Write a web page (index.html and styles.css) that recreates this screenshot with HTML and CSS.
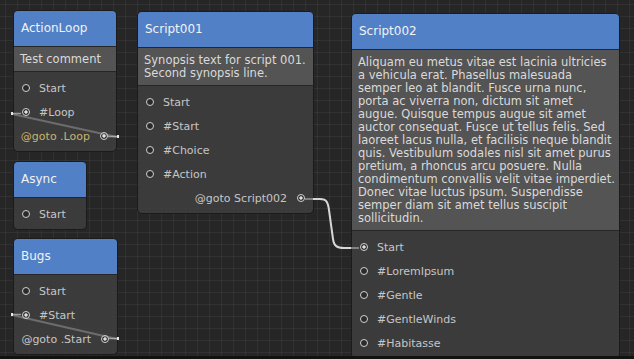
FILE: index.html
```html
<!DOCTYPE html>
<html>
<head>
    <title>Script Graph</title>
    <link rel="stylesheet" href="styles.css">
</head>
<body>
    <div class="canvas">
        <div class="node node-actionloop">
            <div class="node-title">ActionLoop</div>
            <div class="node-note">Test comment</div>
            <div class="node-ports">
                <div class="port"><span class="pin"></span><span class="label">Start</span></div>
                <div class="port"><span class="pin linked"></span><span class="label">#Loop</span></div>
                <div class="port out"><span class="label goto">@goto .Loop</span><span class="pin linked"></span></div>
            </div>
        </div>

        <div class="node node-async">
            <div class="node-title">Async</div>
            <div class="node-ports">
                <div class="port"><span class="pin"></span><span class="label">Start</span></div>
            </div>
        </div>

        <div class="node node-bugs">
            <div class="node-title">Bugs</div>
            <div class="node-ports">
                <div class="port"><span class="pin"></span><span class="label">Start</span></div>
                <div class="port"><span class="pin linked"></span><span class="label">#Start</span></div>
                <div class="port out"><span class="label">@goto .Start</span><span class="pin linked"></span></div>
            </div>
        </div>

        <div class="node node-script001">
            <div class="node-title">Script001</div>
            <div class="node-note">Synopsis text for script 001.<br>Second synopsis line.</div>
            <div class="node-ports">
                <div class="port"><span class="pin"></span><span class="label">Start</span></div>
                <div class="port"><span class="pin"></span><span class="label">#Start</span></div>
                <div class="port"><span class="pin"></span><span class="label">#Choice</span></div>
                <div class="port"><span class="pin"></span><span class="label">#Action</span></div>
                <div class="port out"><span class="label">@goto Script002</span><span class="pin linked"></span></div>
            </div>
        </div>

        <div class="node node-script002">
            <div class="node-title">Script002</div>
            <div class="node-note">Aliquam eu metus vitae est lacinia ultricies<br>a vehicula erat. Phasellus malesuada<br>semper leo at blandit. Fusce urna nunc,<br>porta ac viverra non, dictum sit amet<br>augue. Quisque tempus augue sit amet<br>auctor consequat. Fusce ut tellus felis. Sed<br>laoreet lacus nulla, et facilisis neque blandit<br>quis. Vestibulum sodales nisl sit amet purus<br>pretium, a rhoncus arcu posuere. Nulla<br>condimentum convallis velit vitae imperdiet.<br>Donec vitae luctus ipsum. Suspendisse<br>semper diam sit amet tellus suscipit<br>sollicitudin.</div>
            <div class="node-ports">
                <div class="port"><span class="pin linked"></span><span class="label">Start</span></div>
                <div class="port"><span class="pin"></span><span class="label">#LoremIpsum</span></div>
                <div class="port"><span class="pin"></span><span class="label">#Gentle</span></div>
                <div class="port"><span class="pin"></span><span class="label">#GentleWinds</span></div>
                <div class="port"><span class="pin"></span><span class="label">#Habitasse</span></div>
            </div>
        </div>

        <svg class="wires" width="634" height="356" viewBox="0 0 634 356">
            <!-- ActionLoop loops back on itself -->
            <line class="stub" x1="12" y1="113.5" x2="21" y2="113.5"/>
            <line class="stub" x1="108" y1="136.5" x2="117" y2="136.5"/>
            <line class="loop" x1="12" y1="114" x2="117" y2="137"/>
            <rect class="nub" x="11" y="112" width="2" height="3"/>
            <rect class="nub" x="117" y="135" width="2" height="3"/>

            <!-- Bugs loops back on itself -->
            <line class="stub" x1="12" y1="314.5" x2="21" y2="314.5"/>
            <line class="stub" x1="109" y1="338.5" x2="117" y2="338.5"/>
            <line class="loop" x1="12" y1="315" x2="117" y2="339"/>
            <rect class="nub" x="11" y="313" width="2" height="3"/>
            <rect class="nub" x="117" y="337" width="2" height="3"/>

            <!-- Script001 -> Script002 -->
            <line class="stub" x1="305" y1="199" x2="313" y2="199"/>
            <line class="stub" x1="351" y1="248" x2="359" y2="248"/>
            <path class="wire" d="M 313 199 L 320 199 C 327 199 328 203 329 210 L 333 239 C 334 246 337 248 344 248 L 351 248"/>
        </svg>
    </div>
    <div class="statusbar"></div>
</body>
</html>
```

FILE: styles.css
```css
body { margin: 0; background: #111; font-family: "DejaVu Sans", Verdana, sans-serif; overflow: hidden; }
.canvas {
    position: relative; width: 634px; height: 356px; overflow: hidden;
    background-color: #262626;
    background-image:
        linear-gradient(to right, rgba(255,255,255,0.05) 1px, transparent 1px),
        linear-gradient(to bottom, rgba(255,255,255,0.05) 1px, transparent 1px);
    background-size: 12px 12px;
    background-position: 5px 4px;
}
.statusbar { height: 3px; background: #121212; }

.node { position: absolute; box-sizing: border-box; border: 1px solid #1b1b1b; border-radius: 5px; overflow: hidden; background: rgba(62,62,62,0.9); }
.node-actionloop { left: 13px; top: 10px; width: 104px; }
.node-async { left: 13px; top: 161px; width: 74px; }
.node-bugs { left: 13px; top: 238px; width: 105px; }
.node-script001 { left: 137px; top: 11px; width: 177px; }
.node-script002 { left: 351px; top: 13px; width: 269px; }

.node-title { height: 35px; line-height: 35px; padding: 0 7px; background: #5180c7; color: #f2f2f2; font-size: 12px; border-bottom: 1px solid #262626; white-space: nowrap; }
.node-note { padding: 6px 6px 5px; background: #545454; color: #dadada; font-size: 11.5px; line-height: 13px; border-bottom: 1px solid #262626; white-space: nowrap; overflow: hidden; }
.node-ports { padding: 4px 0 3px; }

.port { display: flex; align-items: center; height: 24px; padding: 0 8px; gap: 9px; font-size: 11px; color: #c6c6c6; white-space: nowrap; }
.port.out { justify-content: flex-end; gap: 10px; }
.label.goto { color: #c8b46c; }

.pin { flex: none; box-sizing: border-box; width: 8px; height: 8px; border: 1.4px solid #d2d2d2; border-radius: 50%; background: #2a2a2a; }
.pin.linked { background: radial-gradient(circle, #e0e0e0 0 1.4px, #2a2a2a 1.9px); }

.wires { position: absolute; left: 0; top: 0; pointer-events: none; }
.wires .stub { stroke: #9a9a9a; stroke-width: 1.5; }
.wires .loop { stroke: rgba(200,200,200,0.35); stroke-width: 2; }
.wires .wire { fill: none; stroke: #d6d6d6; stroke-width: 2; }
.wires .nub { fill: #e6e6e6; }
```
